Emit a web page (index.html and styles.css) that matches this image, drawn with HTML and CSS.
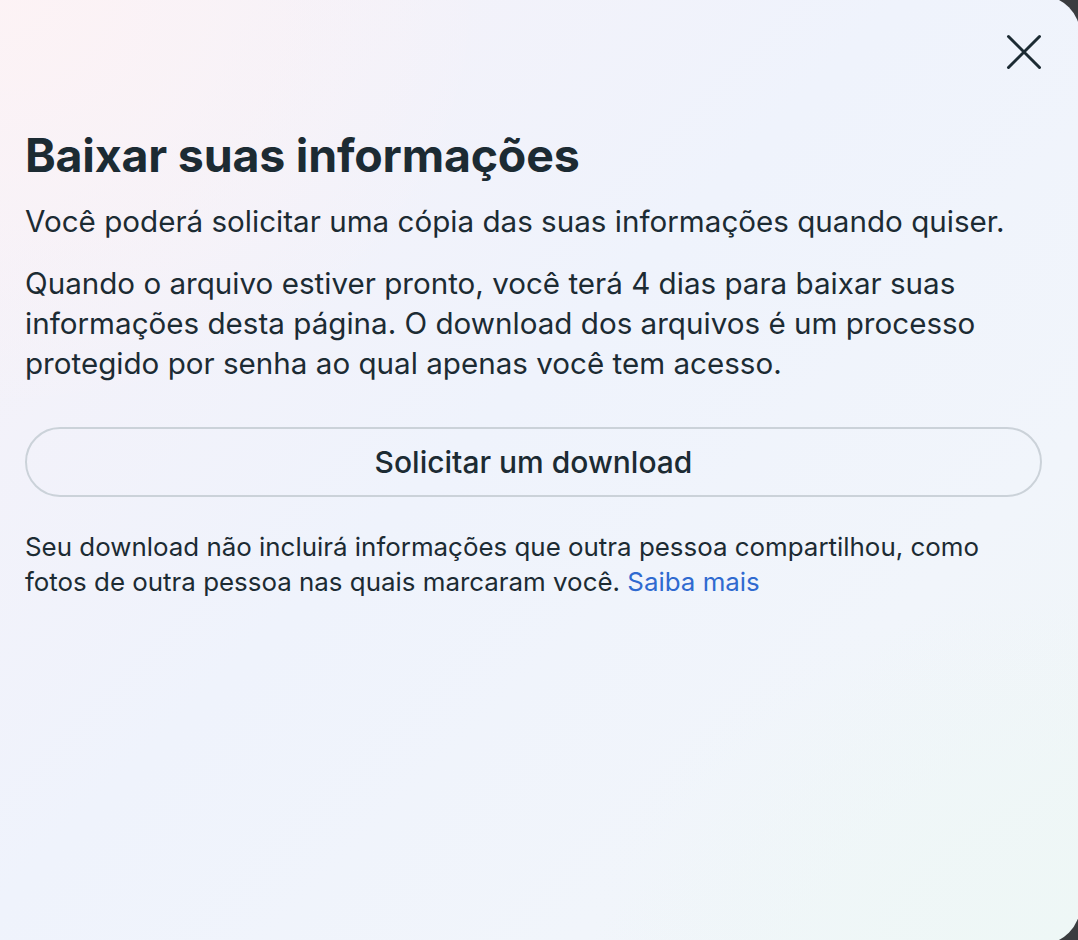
FILE: index.html
```html
<!DOCTYPE html>
<html lang="pt-BR">
<head>
<meta charset="utf-8">
<title>Baixar suas informações</title>
<link rel="stylesheet" href="styles.css">
</head>
<body>
<div class="card">
  <div class="top">
    <button class="close" aria-label="Fechar">
      <svg width="36" height="36" viewBox="0 0 36 36"><path d="M2.5 2.5 L33.5 33.5 M33.5 2.5 L2.5 33.5" stroke="#1c2b33" stroke-width="3" stroke-linecap="round" fill="none"/></svg>
    </button>
  </div>
  <h1 class="title">Baixar suas informações</h1>
  <p class="text first">Você poderá solicitar uma cópia das suas informações quando quiser.</p>
  <p class="text">Quando o arquivo estiver pronto, você terá 4 dias para baixar suas informações desta página. O download dos arquivos é um processo protegido por senha ao qual apenas você tem acesso.</p>
  <button class="request">Solicitar um download</button>
  <p class="note">Seu download não incluirá informações que outra pessoa compartilhou, como fotos de outra pessoa nas quais marcaram você. <a href="#" class="link">Saiba mais</a></p>
</div>
</body>
</html>
```
FILE: styles.css
```css
html, body {
  margin: 0;
  padding: 0;
  overflow: hidden;
}
body {
  background: #3a3c3f;
  font-family: Inter, "Noto Sans", sans-serif;
  color: #1c2b33;
  width: 1078px;
  height: 940px;
}
.card {
  box-sizing: border-box;
  width: 1080px;
  height: 948px;
  margin-top: -4px;
  border-radius: 0 38px 38px 0;
  background:
    radial-gradient(ellipse 700px 600px at 0% 0%, rgba(253, 243, 245, 0.95), rgba(253, 243, 245, 0) 70%),
    radial-gradient(ellipse 700px 500px at 100% 100%, rgba(238, 247, 246, 1), rgba(238, 247, 246, 0) 70%),
    linear-gradient(135deg, #f6f1f8 0%, #eff3fc 45%, #f1f5fb 75%, #eff6f6 100%);
  padding: 38px 38px 0 25px;
  display: flex;
  flex-direction: column;
  align-items: stretch;
}
.top {
  display: flex;
  justify-content: flex-end;
  height: 36px;
}
.close {
  border: 0;
  background: none;
  padding: 0;
  width: 36px;
  height: 36px;
  cursor: pointer;
}
.close svg { display: block; }
.title {
  margin: 57px 0 0;
  font-size: 46.5px;
  font-weight: 700;
  line-height: 56px;
  letter-spacing: -0.2px;
}
.text {
  margin: 0;
  font-size: 29.6px;
  line-height: 40px;
  font-weight: 400;
}
.text.first {
  margin: 18px 0 22px;
}
.request {
  margin-top: 44px;
  height: 70px;
  border: 2px solid #cbd2d9;
  border-radius: 35px;
  background: transparent;
  font-family: inherit;
  font-size: 30px;
  font-weight: 500;
  color: #1c2b33;
  width: 100%;
}
.note {
  margin: 32px 0 0;
  max-width: 985px;
  font-size: 25.9px;
  line-height: 35px;
}
.link {
  color: #2f6ad0;
  text-decoration: none;
}
```
